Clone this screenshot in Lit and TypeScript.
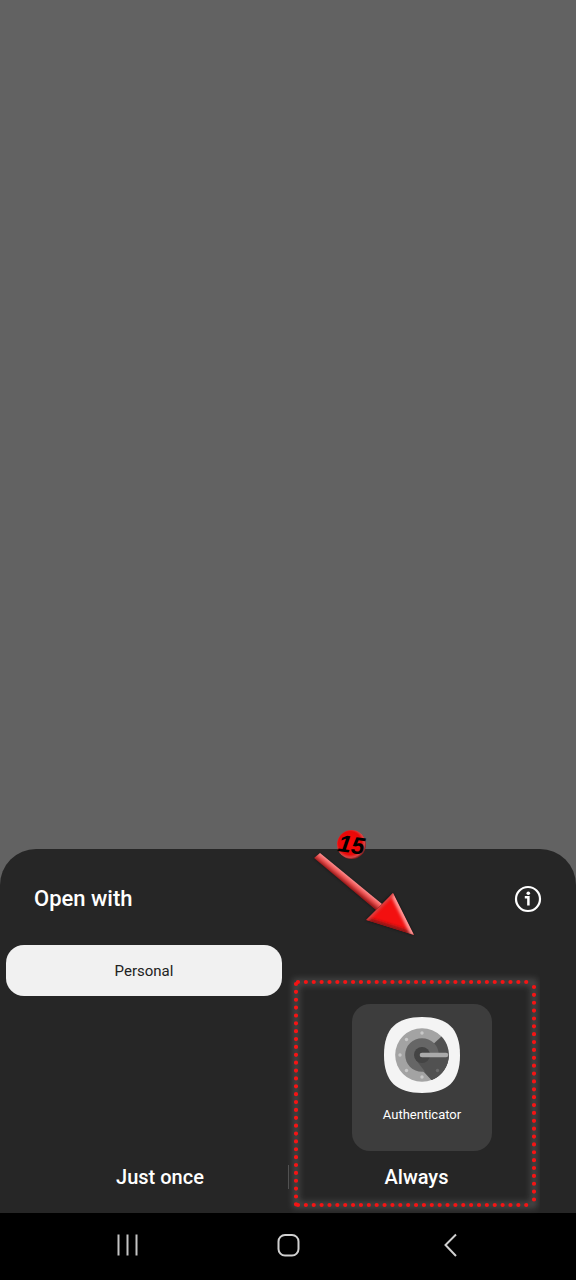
import { LitElement, html, css, svg } from "lit";
import { customElement } from "lit/decorators.js";

const infoIcon = html`
  <svg width="28" height="28" viewBox="0 0 28 28" fill="none" stroke="#fff" aria-hidden="true">
    <circle cx="14" cy="14" r="12" stroke-width="2.2" />
    <path d="M10.800 12.200h3.600v8.400" stroke-width="2.500" />
    <circle cx="14.300" cy="8.200" r="1.800" fill="#fff" stroke="none" />
  </svg>
`;

const dialDots = [
  [38, 16], [22.5, 22.5], [16, 38], [22.5, 53.5], [38, 60],
].map(([x, y]) => svg`<circle cx=${x} cy=${y} r="1.7" fill="#c8c8c8" />`);

const appIcon = html`
  <svg width="76" height="76" viewBox="0 0 76 76" aria-hidden="true">
    <path fill="#f4f4f4" d="M38 0C63 0 76 11 76 38S63 76 38 76 0 65 0 38 13 0 38 0Z" />
    <circle cx="38" cy="38" r="26.800" fill="#a3a3a3" />
    <path fill="#515151" d="M38 38L52 24.500L57.500 19.500A26.800 26.800 0 0 1 47.500 63L38 53Z" />
    <circle cx="38" cy="38" r="16.800" fill="#666" />
    <path fill="#515151" d="M32 43L38 38H64.800A26.800 26.800 0 0 1 47.500 63Z" />
    <circle cx="38" cy="38" r="8" fill="#444" />
    ${dialDots}
    <circle cx="53.500" cy="53.500" r="1.700" fill="#6b6b6b" />
    <path d="M38 38H62" stroke="#aaa" stroke-width="4.600" stroke-linecap="round" />
  </svg>
`;

const annotation = html`
  <svg class="annotation" width="260" height="392" viewBox="0 0 260 392" aria-hidden="true">
    <defs>
      <radialGradient id="ball" cx=".45" cy=".45" r=".55">
        <stop offset="0" stop-color="#fa0808" />
        <stop offset=".72" stop-color="#e80808" />
        <stop offset=".9" stop-color="#d84646" />
        <stop offset="1" stop-color="#8d2020" />
      </radialGradient>
      <linearGradient id="shaft" gradientUnits="userSpaceOnUse" x1="40" y1="24" x2="35.100" y2="30">
        <stop offset="0" stop-color="#ff9090" />
        <stop offset=".5" stop-color="#e85050" />
        <stop offset="1" stop-color="#9c1c1c" />
      </linearGradient>
      <filter id="glow" x="-10%" y="-10%" width="120%" height="120%">
        <feGaussianBlur stdDeviation="3" />
      </filter>
      <filter id="soft" x="-20%" y="-20%" width="140%" height="140%">
        <feGaussianBlur stdDeviation="1.500" />
      </filter>
      <clipPath id="head"><path d="M113 64L134 106L86 91Z" /></clipPath>
    </defs>
    <rect x="16" y="153" width="238" height="223" fill="none" stroke="#777" stroke-width="6" opacity=".45" filter="url(#glow)" />
    <g stroke="#f51414" stroke-width="4.200" stroke-linecap="round" stroke-dasharray="0 7.870">
      <path d="M18 153H254" />
      <path d="M16 155V376" />
      <path d="M254 158V376" />
      <path d="M18 376H254" />
    </g>
    <path d="M40 25L101 75L113 64L134 106L86 91L96 81L34 29Z" fill="#000" opacity=".5" filter="url(#soft)" />
    <path d="M40 24L102 75L96 81L34 29Z" fill="url(#shaft)" />
    <g clip-path="url(#head)">
      <path d="M113 64L134 106L86 91Z" fill="#f31010" />
      <path d="M86 91L134 106" stroke="#8d1212" stroke-width="6" filter="url(#soft)" />
      <path d="M113 64L134 106" stroke="#ff9c9c" stroke-width="6" filter="url(#soft)" />
      <path d="M86 91L113 64" stroke="#d84444" stroke-width="4" filter="url(#soft)" />
    </g>
    <circle cx="71.500" cy="15.500" r="14.500" fill="url(#ball)" />
    <text x="71.500" y="24" text-anchor="middle" transform="rotate(8 71.500 15.500)">15</text>
  </svg>
`;

@customElement("app-root")
export class AppRoot extends LitElement {
  static styles = css`
    :host {
      display: flex;
      flex-direction: column;
      justify-content: flex-end;
      min-height: 100vh;
      background: #626262;
      color: #fff;
      font-family: Roboto, "Liberation Sans", sans-serif;
    }
    button {
      margin: 0;
      padding: 0;
      border: 0;
      background: none;
      color: inherit;
      font: inherit;
      cursor: pointer;
    }
    svg {
      display: block;
    }
    .sheet {
      position: relative;
      background: #262626;
      border-radius: 36px 36px 0 0;
    }
    .header {
      display: flex;
      align-items: center;
      justify-content: space-between;
      padding: 32px 34px 28px;
    }
    .title {
      margin: 0;
      font-size: 22px;
      line-height: 36px;
      font-weight: 500;
    }
    .tabs {
      display: grid;
      grid-template-columns: 1fr 1fr;
      gap: 12px;
      padding: 0 6px;
    }
    .tab {
      height: 51px;
      border-radius: 18px;
      background: #f1f1f1;
      color: #222;
      font-size: 15px;
    }
    .apps {
      display: flex;
      justify-content: flex-end;
      padding: 8px 84px 0;
    }
    .app {
      display: flex;
      flex-direction: column;
      align-items: center;
      gap: 12px;
      width: 140px;
      padding: 13px 0 26px;
      border-radius: 18px;
      background: #3d3d3d;
      font-size: 13px;
      line-height: 20px;
    }
    .actions {
      display: grid;
      grid-template-columns: 1fr 1fr;
      padding: 14px 32px 24px;
    }
    .action {
      font-size: 20px;
      line-height: 24px;
      font-weight: 500;
    }
    .action + .action {
      border-left: 1px solid #505050;
    }
    .nav {
      display: flex;
      align-items: center;
      justify-content: space-between;
      padding: 16px 110px 19px;
      background: #000;
    }
    .annotation {
      position: absolute;
      left: calc(50% - 8px);
      top: -20px;
      pointer-events: none;
    }
    .annotation text {
      font: italic bold 24px "Liberation Sans", sans-serif;
      fill: #000;
    }
  `;

  render() {
    return html`
      <main class="sheet">
        <header class="header">
          <h1 class="title">Open with</h1>
          <button aria-label="App info">${infoIcon}</button>
        </header>
        <div class="tabs" role="tablist">
          <button class="tab" role="tab" aria-selected="true">Personal</button>
        </div>
        <div class="apps">
          <button class="app">${appIcon}<span>Authenticator</span></button>
        </div>
        <div class="actions">
          <button class="action">Just once</button>
          <button class="action">Always</button>
        </div>
        ${annotation}
      </main>
      <nav class="nav">
        <button aria-label="Recent apps">
          <svg width="34" height="32" viewBox="0 0 34 32" stroke="#c4c4c4" stroke-width="2">
            <path d="M8.500 5.500V26.500M17.500 5.500V26.500M26.500 5.500V26.500" />
          </svg>
        </button>
        <button aria-label="Home">
          <svg width="34" height="32" viewBox="0 0 34 32" fill="none" stroke="#d0d0d0" stroke-width="2">
            <rect x="7.500" y="6" width="20" height="20.500" rx="6.500" />
          </svg>
        </button>
        <button aria-label="Back">
          <svg width="34" height="32" viewBox="0 0 34 32" fill="none" stroke="#d0d0d0" stroke-width="2">
            <path d="M24 5.500L13.500 16L24 27" />
          </svg>
        </button>
      </nav>
    `;
  }
}
